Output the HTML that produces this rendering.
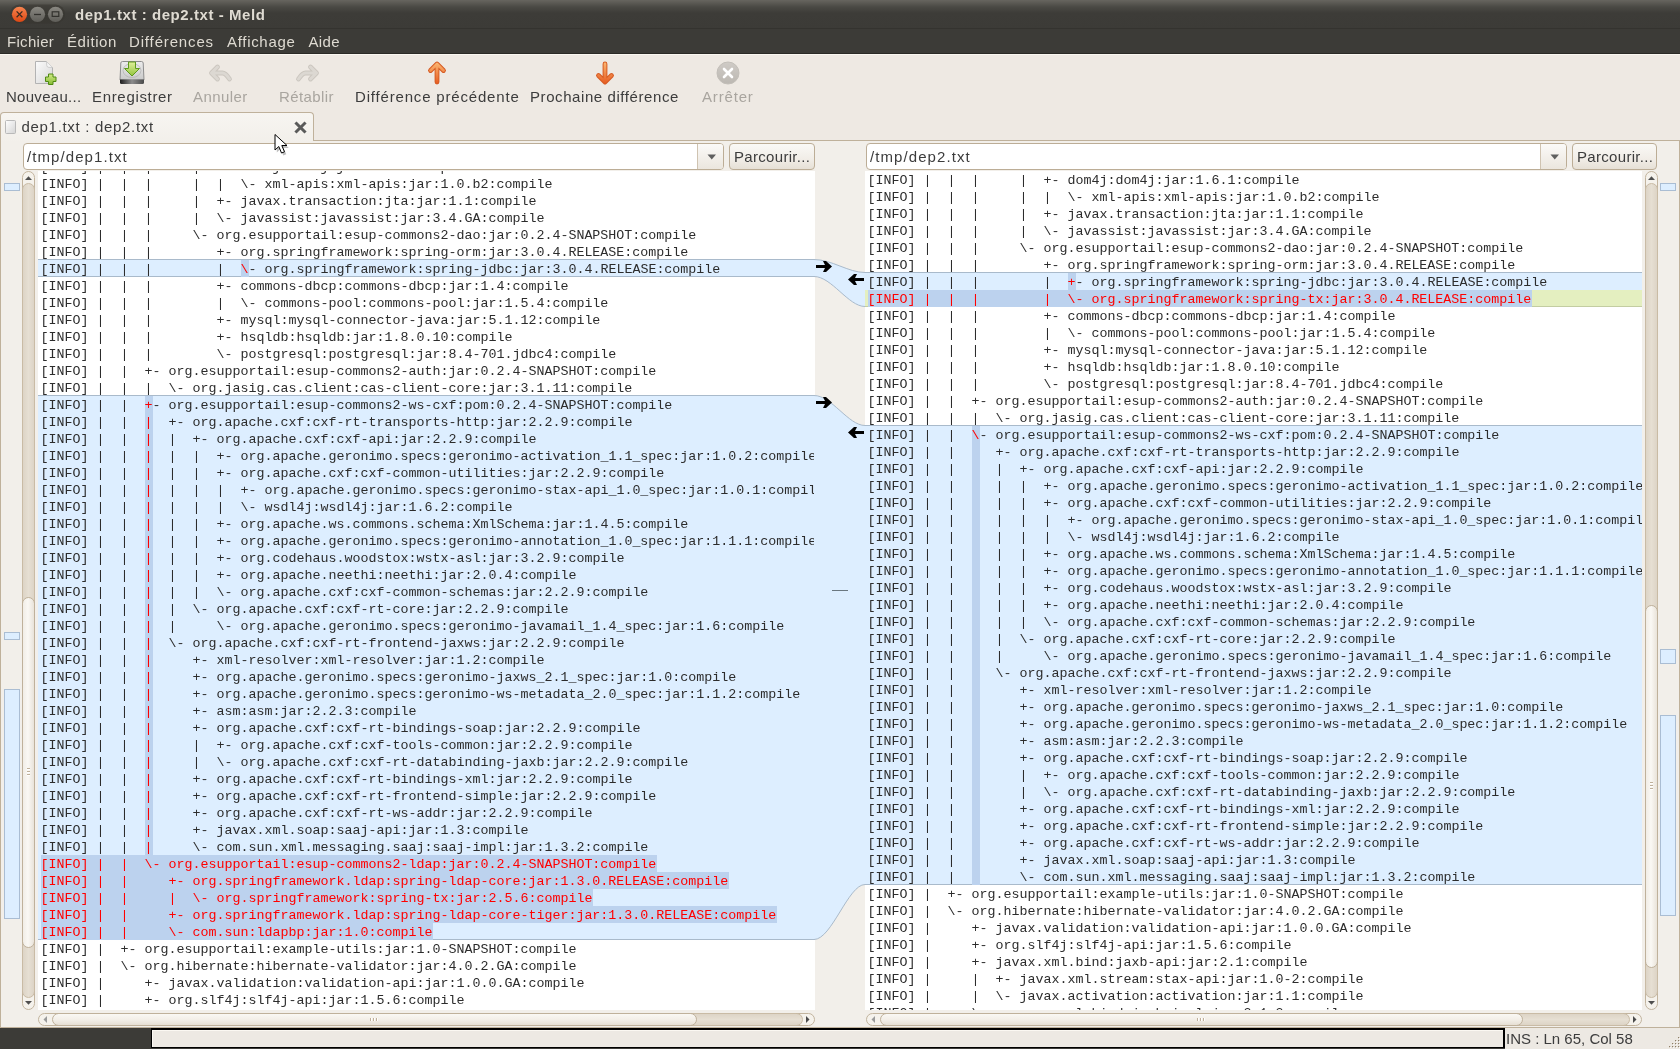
<!DOCTYPE html><html><head><meta charset="utf-8"><style>
*{margin:0;padding:0;box-sizing:border-box}
html,body{width:1680px;height:1049px;overflow:hidden}
body{position:relative;background:#eee9e3;font-family:"Liberation Sans",sans-serif}
.a{position:absolute}
.t{white-space:pre}
.code{font-family:"Liberation Mono",monospace;font-size:13.3333px;line-height:17px;white-space:pre;color:#2c2c2c}
.ln{position:absolute;left:2.5px;height:17px}
.r{color:#ff0000}
.hl{background:#bcd2ee}
.tv{position:absolute;background:#fff;overflow:hidden}
.sb{position:absolute}
</style></head><body><div class="a" style="left:0;top:0;width:1680px;height:1049px;overflow:hidden;will-change:transform">
<div class="a" style="left:0;top:0;width:1680px;height:29px;background:linear-gradient(#67655f 0px,#4a4944 7px,#3d3c38 13px,#3c3b37 100%)"></div>
<div class="a" style="left:0;top:28px;width:1680px;height:1px;background:#34332f"></div>
<svg class="a" style="left:0;top:0" width="80" height="29" viewBox="0 0 80 29">
<defs>
<linearGradient id="gc" x1="0" y1="0" x2="0" y2="1"><stop offset="0" stop-color="#f7844f"/><stop offset="1" stop-color="#dd4814"/></linearGradient>
<linearGradient id="gg" x1="0" y1="0" x2="0" y2="1"><stop offset="0" stop-color="#8a8882"/><stop offset="1" stop-color="#5f5e59"/></linearGradient>
</defs>
<rect x="10" y="4.5" width="55" height="19" rx="9.5" fill="#36352f" opacity="0.55"/>
<circle cx="19.5" cy="14.3" r="7.6" fill="url(#gc)"/>
<path d="M16.6 11.4 L22.4 17.2 M22.4 11.4 L16.6 17.2" stroke="#3a2a20" stroke-width="1.3"/>
<circle cx="37.5" cy="14.3" r="7.6" fill="url(#gg)"/>
<path d="M34 14.5 H41" stroke="#33322e" stroke-width="1.3"/>
<circle cx="55.5" cy="14.3" r="7.6" fill="url(#gg)"/>
<rect x="52.2" y="11.8" width="6.6" height="4.6" fill="none" stroke="#33322e" stroke-width="1.2"/>
</svg>
<div class="a t" style="left:75px;top:7.30px;font-size:15px;line-height:15px;color:#dfdbd2;font-weight:bold;letter-spacing:0.560px;">dep1.txt : dep2.txt - Meld</div>
<div class="a" style="left:0;top:29px;width:1680px;height:25px;background:#3c3b37"></div>
<div class="a" style="left:0;top:53px;width:1680px;height:1px;background:#2b2a26"></div>
<div class="a t" style="left:7px;top:34.00px;font-size:15px;line-height:15px;color:#dfdbd2;font-weight:normal;letter-spacing:0.300px;">Fichier</div>
<div class="a t" style="left:67px;top:34.00px;font-size:15px;line-height:15px;color:#dfdbd2;font-weight:normal;letter-spacing:0.580px;">Édition</div>
<div class="a t" style="left:129px;top:34.00px;font-size:15px;line-height:15px;color:#dfdbd2;font-weight:normal;letter-spacing:0.850px;">Différences</div>
<div class="a t" style="left:227px;top:34.00px;font-size:15px;line-height:15px;color:#dfdbd2;font-weight:normal;letter-spacing:0.690px;">Affichage</div>
<div class="a t" style="left:308.5px;top:34.00px;font-size:15px;line-height:15px;color:#dfdbd2;font-weight:normal;letter-spacing:0.330px;">Aide</div>
<div class="a" style="left:0;top:54px;width:1680px;height:1px;background:#faf7f1"></div>
<svg class="a" style="left:28px;top:56px" width="124" height="34" viewBox="28 56 124 34">
<defs><linearGradient id="pg" x1="0" y1="0" x2="1" y2="1"><stop offset="0" stop-color="#fbfbfb"/><stop offset="1" stop-color="#d6d6d6"/></linearGradient>
<linearGradient id="grn" x1="0" y1="0" x2="0" y2="1"><stop offset="0" stop-color="#d2ea86"/><stop offset="1" stop-color="#86bb34"/></linearGradient>
<linearGradient id="dr" x1="0" y1="0" x2="0" y2="1"><stop offset="0" stop-color="#ececec"/><stop offset="1" stop-color="#c9c9c9"/></linearGradient>
<linearGradient id="db" x1="0" y1="0" x2="1" y2="0"><stop offset="0" stop-color="#1e1e1e"/><stop offset="0.5" stop-color="#8c8c8c"/><stop offset="1" stop-color="#4a4a4a"/></linearGradient>
<linearGradient id="ga" x1="0" y1="0" x2="0" y2="1"><stop offset="0" stop-color="#e0f09a"/><stop offset="1" stop-color="#92c43e"/></linearGradient></defs>
<path d="M35.5 61.5 H46.5 L52.5 67.5 V83.5 H35.5 Z" fill="url(#pg)" stroke="#b3b3b3"/>
<path d="M46.5 61.5 Q46.5 66.5 47.5 67 Q48 67.5 52.5 67.5" fill="#f4f4f4" stroke="#c4c4c4" stroke-width="0.8"/>
<path d="M45.5 77 h3 v-3 h4.5 v3 h3 v4.5 h-3 v3 h-4.5 v-3 h-3 z" fill="url(#grn)" stroke="#4f8a12" stroke-width="1"/>
<path d="M122.5 61.5 H141.5 Q143 61.5 143.2 63 L144 80 H120 L120.8 63 Q121 61.5 122.5 61.5 Z" fill="url(#dr)" stroke="#8d8d8d"/>
<path d="M120 79.5 H144 V82.5 Q144 84 142.5 84 H121.5 Q120 84 120 82.5 Z" fill="url(#db)"/>
<ellipse cx="132" cy="70.5" rx="9" ry="7" fill="none" stroke="#b0b0b0" stroke-width="0.7"/>
<path d="M128.5 62 H135.5 V68.5 H139.5 L132 76 L124.5 68.5 H128.5 Z" fill="url(#ga)" stroke="#5e9a1c" stroke-width="1"/>
</svg>

<svg class="a" style="left:195px;top:56px" width="140" height="34" viewBox="195 56 140 34">
<g fill="none" stroke-linecap="round" stroke-linejoin="round">
<path d="M217.5 67 L211.5 73 L217.5 79 M212 73 H222.5 Q225.5 73 229.5 79" stroke="#cbc6bf" stroke-width="4.8"/>
<path d="M217.5 67 L211.5 73 L217.5 79 M212 73 H222.5 Q225.5 73 229.5 79" stroke="#dcd8d2" stroke-width="3"/>
<path d="M310.5 67 L316.5 73 L310.5 79 M316 73 H305.5 Q302.5 73 298.5 79" stroke="#cbc6bf" stroke-width="4.8"/>
<path d="M310.5 67 L316.5 73 L310.5 79 M316 73 H305.5 Q302.5 73 298.5 79" stroke="#dcd8d2" stroke-width="3"/>
</g></svg>

<svg class="a" style="left:415px;top:56px" width="210" height="34" viewBox="415 56 210 34">
<defs><linearGradient id="or1" gradientUnits="userSpaceOnUse" x1="0" y1="62" x2="0" y2="84"><stop offset="0" stop-color="#fbb873"/><stop offset="1" stop-color="#e65a1f"/></linearGradient></defs>
<g fill="none" stroke-linecap="round" stroke-linejoin="round">
<path d="M430.5 70.5 L437 64 L443.5 70.5 M437 64.5 V82" stroke="#d65a22" stroke-width="4.8"/>
<path d="M430.5 70.5 L437 64 L443.5 70.5 M437 64.5 V82" stroke="url(#or1)" stroke-width="2.8"/>
<path d="M598.5 75.5 L605 82 L611.5 75.5 M605 81.5 V64" stroke="#d65a22" stroke-width="4.8"/>
<path d="M598.5 75.5 L605 82 L611.5 75.5 M605 81.5 V64" stroke="url(#or1)" stroke-width="2.8"/>
</g></svg>

<svg class="a" style="left:714.5px;top:60px" width="26" height="26" viewBox="0 0 26 26">
<defs><linearGradient id="st" x1="0" y1="0" x2="0" y2="1"><stop offset="0" stop-color="#cfcbc6"/><stop offset="1" stop-color="#bcb8b2"/></linearGradient></defs>
<circle cx="13" cy="13" r="11" fill="url(#st)" stroke="#c2beb8"/>
<path d="M9 9 L17 17 M17 9 L9 17" stroke="#fff" stroke-width="2.6" stroke-linecap="round"/>
</svg>
<div class="a t" style="left:6px;top:88.80px;font-size:15px;line-height:15px;color:#3c3c3c;font-weight:normal;letter-spacing:0.280px;">Nouveau...</div>
<div class="a t" style="left:92px;top:88.80px;font-size:15px;line-height:15px;color:#3c3c3c;font-weight:normal;letter-spacing:0.675px;">Enregistrer</div>
<div class="a t" style="left:193px;top:88.80px;font-size:15px;line-height:15px;color:#a9a59f;font-weight:normal;letter-spacing:0.420px;">Annuler</div>
<div class="a t" style="left:279px;top:88.80px;font-size:15px;line-height:15px;color:#a9a59f;font-weight:normal;letter-spacing:0.390px;">Rétablir</div>
<div class="a t" style="left:355px;top:88.80px;font-size:15px;line-height:15px;color:#3c3c3c;font-weight:normal;letter-spacing:0.820px;">Différence précédente</div>
<div class="a t" style="left:530px;top:88.80px;font-size:15px;line-height:15px;color:#3c3c3c;font-weight:normal;letter-spacing:0.580px;">Prochaine différence</div>
<div class="a t" style="left:702px;top:88.80px;font-size:15px;line-height:15px;color:#a9a59f;font-weight:normal;letter-spacing:0.830px;">Arrêter</div>
<div class="a" style="left:313px;top:140px;width:1367px;height:1px;background:#bfb19b"></div>
<div class="a" style="left:0;top:112px;width:314px;height:31px;border:1px solid #bfb19b;border-bottom:none;border-radius:4px 4px 0 0;background:linear-gradient(#f7f5f1,#f2efea)"></div>
<svg class="a" style="left:4px;top:119px" width="14" height="16" viewBox="0 0 14 16">
<defs><linearGradient id="td" x1="0" y1="0" x2="1" y2="1"><stop offset="0" stop-color="#ffffff"/><stop offset="1" stop-color="#d4d4d4"/></linearGradient></defs>
<rect x="1.5" y="1.5" width="10" height="13" rx="1" fill="url(#td)" stroke="#b9b9b9"/>
</svg>
<div class="a t" style="left:21.5px;top:119.30px;font-size:15px;line-height:15px;color:#3c3c3c;font-weight:normal;letter-spacing:0.690px;">dep1.txt : dep2.txt</div>
<svg class="a" style="left:293.5px;top:120.5px" width="13" height="13" viewBox="0 0 13 13">
<path d="M2.5 2.5 L10.5 10.5 M10.5 2.5 L2.5 10.5" stroke="#5a5a5a" stroke-width="3" stroke-linecap="square"/>
</svg>
<div class="a" style="left:0;top:141px;width:1px;height:887px;background:#bfb19b"></div>
<div class="a" style="left:1679px;top:140px;width:1px;height:888px;background:#bfb19b"></div>
<div class="a" style="left:0;top:1027px;width:1680px;height:1px;background:#bfb19b"></div>
<div class="a" style="left:1px;top:141px;width:1678px;height:886px;background:#f2efea"></div>
<div class="a" style="left:23px;top:143px;width:701px;height:27px;border:1px solid #bcad96;border-radius:4px;background:#fff;overflow:hidden"><div class="a" style="left:673px;top:0;width:27px;height:25px;border-left:1px solid #cfc3b1;background:linear-gradient(#fbfaf8,#ebe6de)"></div><svg class="a" style="left:683px;top:10px" width="10" height="7"><path d="M0.5 0.5 H9 L4.75 5.5Z" fill="#5f5f5f"/></svg></div>
<div class="a t" style="left:27px;top:149.00px;font-size:15px;line-height:15px;color:#3c3c3c;font-weight:normal;letter-spacing:1.080px;">/tmp/dep1.txt</div>
<div class="a" style="left:729px;top:143px;width:86px;height:27px;border:1px solid #bcad96;border-radius:4px;background:linear-gradient(#faf9f6,#f1ede7 60%,#e6e0d6)"></div>
<div class="a t" style="left:734px;top:149.00px;font-size:15px;line-height:15px;color:#3c3c3c;font-weight:normal;letter-spacing:0.310px;">Parcourir...</div>
<div class="a" style="left:866px;top:143px;width:701px;height:27px;border:1px solid #bcad96;border-radius:4px;background:#fff;overflow:hidden"><div class="a" style="left:673px;top:0;width:27px;height:25px;border-left:1px solid #cfc3b1;background:linear-gradient(#fbfaf8,#ebe6de)"></div><svg class="a" style="left:683px;top:10px" width="10" height="7"><path d="M0.5 0.5 H9 L4.75 5.5Z" fill="#5f5f5f"/></svg></div>
<div class="a t" style="left:870px;top:149.00px;font-size:15px;line-height:15px;color:#3c3c3c;font-weight:normal;letter-spacing:1.080px;">/tmp/dep2.txt</div>
<div class="a" style="left:1572px;top:143px;width:85px;height:27px;border:1px solid #bcad96;border-radius:4px;background:linear-gradient(#faf9f6,#f1ede7 60%,#e6e0d6)"></div>
<div class="a t" style="left:1577px;top:149.00px;font-size:15px;line-height:15px;color:#3c3c3c;font-weight:normal;letter-spacing:0.310px;">Parcourir...</div>
<div class="a" style="left:4px;top:183px;width:16px;height:8px;background:#ddeeff;border:1px solid #aabdd3"></div>
<div class="a" style="left:4px;top:632px;width:16px;height:8px;background:#ddeeff;border:1px solid #aabdd3"></div>
<div class="a" style="left:4px;top:689px;width:16px;height:230px;background:#ddeeff;border:1px solid #aabdd3"></div>
<div class="a" style="left:1660px;top:183px;width:16px;height:8px;background:#ddeeff;border:1px solid #aabdd3"></div>
<div class="a" style="left:1660px;top:649px;width:16px;height:15px;background:#ddeeff;border:1px solid #aabdd3"></div>
<div class="a" style="left:1660px;top:715px;width:16px;height:201px;background:#ddeeff;border:1px solid #aabdd3"></div>
<div class="a" style="left:22px;top:171px;width:13px;height:839px;border:1px solid #c2b49e;border-radius:7px;background:#f5f2ec"></div>
<div class="a" style="left:22px;top:183px;width:13px;height:815px;border:1px solid #c9bba5;border-radius:7px;background:linear-gradient(90deg,#ddd4c6,#e6dfd3 50%,#ddd4c6)"></div>
<div class="a" style="left:22px;top:597px;width:13px;height:351px;border:1px solid #bfb19b;border-radius:7px;background:linear-gradient(90deg,#f1ede6,#faf8f4 45%,#e9e3d9)"></div>
<svg class="a" style="left:22px;top:767px" width="13" height="10"><g fill="#bfb09a"><rect x="5" y="1" width="3" height="1"/><rect x="5" y="4" width="3" height="1"/><rect x="5" y="7" width="3" height="1"/></g><g fill="#fff"><rect x="5" y="2" width="3" height="1"/><rect x="5" y="5" width="3" height="1"/><rect x="5" y="8" width="3" height="1"/></g></svg>
<svg class="a" style="left:24px;top:175px" width="9" height="6"><path d="M1 5 L4.5 1.2 L8 5Z" fill="#4f4f4f"/></svg>
<svg class="a" style="left:24px;top:1000px" width="9" height="6"><path d="M1 1 L4.5 4.8 L8 1Z" fill="#4f4f4f"/></svg>
<div class="a" style="left:1645px;top:171px;width:13px;height:839px;border:1px solid #c2b49e;border-radius:7px;background:#f5f2ec"></div>
<div class="a" style="left:1645px;top:183px;width:13px;height:815px;border:1px solid #c9bba5;border-radius:7px;background:linear-gradient(90deg,#ddd4c6,#e6dfd3 50%,#ddd4c6)"></div>
<div class="a" style="left:1645px;top:605px;width:13px;height:363px;border:1px solid #bfb19b;border-radius:7px;background:linear-gradient(90deg,#f1ede6,#faf8f4 45%,#e9e3d9)"></div>
<svg class="a" style="left:1645px;top:781px" width="13" height="10"><g fill="#bfb09a"><rect x="5" y="1" width="3" height="1"/><rect x="5" y="4" width="3" height="1"/><rect x="5" y="7" width="3" height="1"/></g><g fill="#fff"><rect x="5" y="2" width="3" height="1"/><rect x="5" y="5" width="3" height="1"/><rect x="5" y="8" width="3" height="1"/></g></svg>
<svg class="a" style="left:1647px;top:175px" width="9" height="6"><path d="M1 5 L4.5 1.2 L8 5Z" fill="#4f4f4f"/></svg>
<svg class="a" style="left:1647px;top:1000px" width="9" height="6"><path d="M1 1 L4.5 4.8 L8 1Z" fill="#4f4f4f"/></svg>
<div class="a" style="left:38px;top:1013px;width:777px;height:13px;border:1px solid #c2b49e;border-radius:7px;background:#f5f2ec"></div>
<div class="a" style="left:54px;top:1013px;width:749px;height:13px;border:1px solid #c9bba5;border-radius:7px;background:linear-gradient(#ddd4c6,#e6dfd3 50%,#ddd4c6)"></div>
<div class="a" style="left:52px;top:1013px;width:645px;height:13px;border:1px solid #bfb19b;border-radius:7px;background:linear-gradient(#faf8f4,#f3efe8 50%,#e6dfd4)"></div>
<svg class="a" style="left:369px;top:1013px" width="10" height="13"><g fill="#bfb09a"><rect x="1" y="5" width="1" height="3"/><rect x="4" y="5" width="1" height="3"/><rect x="7" y="5" width="1" height="3"/></g><g fill="#fff"><rect x="2" y="5" width="1" height="3"/><rect x="5" y="5" width="1" height="3"/><rect x="8" y="5" width="1" height="3"/></g></svg>
<svg class="a" style="left:42px;top:1015px" width="6" height="9"><path d="M5 1 L1.5 4.5 L5 8Z" fill="#9a9a9a"/></svg>
<svg class="a" style="left:805px;top:1015px" width="6" height="9"><path d="M1 1 L4.5 4.5 L1 8Z" fill="#4a4a4a"/></svg>
<div class="a" style="left:866px;top:1013px;width:776px;height:13px;border:1px solid #c2b49e;border-radius:7px;background:#f5f2ec"></div>
<div class="a" style="left:882px;top:1013px;width:748px;height:13px;border:1px solid #c9bba5;border-radius:7px;background:linear-gradient(#ddd4c6,#e6dfd3 50%,#ddd4c6)"></div>
<div class="a" style="left:880px;top:1013px;width:643px;height:13px;border:1px solid #bfb19b;border-radius:7px;background:linear-gradient(#faf8f4,#f3efe8 50%,#e6dfd4)"></div>
<svg class="a" style="left:1196px;top:1013px" width="10" height="13"><g fill="#bfb09a"><rect x="1" y="5" width="1" height="3"/><rect x="4" y="5" width="1" height="3"/><rect x="7" y="5" width="1" height="3"/></g><g fill="#fff"><rect x="2" y="5" width="1" height="3"/><rect x="5" y="5" width="1" height="3"/><rect x="8" y="5" width="1" height="3"/></g></svg>
<svg class="a" style="left:870px;top:1015px" width="6" height="9"><path d="M5 1 L1.5 4.5 L5 8Z" fill="#9a9a9a"/></svg>
<svg class="a" style="left:1632px;top:1015px" width="6" height="9"><path d="M1 1 L4.5 4.5 L1 8Z" fill="#4a4a4a"/></svg>
<div class="tv code" style="left:38px;top:171px;width:777px;height:839px">
<div class="a" style="left:0;top:88px;width:777px;height:18px;background:#ddeeff;border-top:1px solid #a9bacb;border-bottom:1px solid #a9bacb"></div>
<div class="a" style="left:0;top:224px;width:777px;height:545px;background:#ddeeff;border-top:1px solid #a9bacb;border-bottom:1px solid #a9bacb"></div>
<div class="a" style="left:203px;top:89px;width:8px;height:17px;background:#bcd2ee"></div>
<div class="a" style="left:107px;top:225px;width:8px;height:17px;background:#bcd2ee"></div>
<div class="a" style="left:107px;top:242px;width:8px;height:17px;background:#bcd2ee"></div>
<div class="a" style="left:107px;top:259px;width:8px;height:17px;background:#bcd2ee"></div>
<div class="a" style="left:107px;top:276px;width:8px;height:17px;background:#bcd2ee"></div>
<div class="a" style="left:107px;top:293px;width:8px;height:17px;background:#bcd2ee"></div>
<div class="a" style="left:107px;top:310px;width:8px;height:17px;background:#bcd2ee"></div>
<div class="a" style="left:107px;top:327px;width:8px;height:17px;background:#bcd2ee"></div>
<div class="a" style="left:107px;top:344px;width:8px;height:17px;background:#bcd2ee"></div>
<div class="a" style="left:107px;top:361px;width:8px;height:17px;background:#bcd2ee"></div>
<div class="a" style="left:107px;top:378px;width:8px;height:17px;background:#bcd2ee"></div>
<div class="a" style="left:107px;top:395px;width:8px;height:17px;background:#bcd2ee"></div>
<div class="a" style="left:107px;top:412px;width:8px;height:17px;background:#bcd2ee"></div>
<div class="a" style="left:107px;top:429px;width:8px;height:17px;background:#bcd2ee"></div>
<div class="a" style="left:107px;top:446px;width:8px;height:17px;background:#bcd2ee"></div>
<div class="a" style="left:107px;top:463px;width:8px;height:17px;background:#bcd2ee"></div>
<div class="a" style="left:107px;top:480px;width:8px;height:17px;background:#bcd2ee"></div>
<div class="a" style="left:107px;top:497px;width:8px;height:17px;background:#bcd2ee"></div>
<div class="a" style="left:107px;top:514px;width:8px;height:17px;background:#bcd2ee"></div>
<div class="a" style="left:107px;top:531px;width:8px;height:17px;background:#bcd2ee"></div>
<div class="a" style="left:107px;top:548px;width:8px;height:17px;background:#bcd2ee"></div>
<div class="a" style="left:107px;top:565px;width:8px;height:17px;background:#bcd2ee"></div>
<div class="a" style="left:107px;top:582px;width:8px;height:17px;background:#bcd2ee"></div>
<div class="a" style="left:107px;top:599px;width:8px;height:17px;background:#bcd2ee"></div>
<div class="a" style="left:107px;top:616px;width:8px;height:17px;background:#bcd2ee"></div>
<div class="a" style="left:107px;top:633px;width:8px;height:17px;background:#bcd2ee"></div>
<div class="a" style="left:107px;top:650px;width:8px;height:17px;background:#bcd2ee"></div>
<div class="a" style="left:107px;top:667px;width:8px;height:17px;background:#bcd2ee"></div>
<div class="a" style="left:3px;top:684px;width:616px;height:17px;background:#bcd2ee"></div>
<div class="a" style="left:3px;top:701px;width:688px;height:17px;background:#bcd2ee"></div>
<div class="a" style="left:3px;top:718px;width:552px;height:17px;background:#bcd2ee"></div>
<div class="a" style="left:3px;top:735px;width:736px;height:17px;background:#bcd2ee"></div>
<div class="a" style="left:3px;top:752px;width:392px;height:17px;background:#bcd2ee"></div>
<div class="ln" style="top:-12px">[INFO] |  |  |     |  +- dom4j:dom4j:jar:1.6.1:compile</div>
<div class="ln" style="top:5px">[INFO] |  |  |     |  |  \- xml-apis:xml-apis:jar:1.0.b2:compile</div>
<div class="ln" style="top:22px">[INFO] |  |  |     |  +- javax.transaction:jta:jar:1.1:compile</div>
<div class="ln" style="top:39px">[INFO] |  |  |     |  \- javassist:javassist:jar:3.4.GA:compile</div>
<div class="ln" style="top:56px">[INFO] |  |  |     \- org.esupportail:esup-commons2-dao:jar:0.2.4-SNAPSHOT:compile</div>
<div class="ln" style="top:73px">[INFO] |  |  |        +- org.springframework:spring-orm:jar:3.0.4.RELEASE:compile</div>
<div class="ln" style="top:90px">[INFO] |  |  |        |  <span class="r">\</span>- org.springframework:spring-jdbc:jar:3.0.4.RELEASE:compile</div>
<div class="ln" style="top:107px">[INFO] |  |  |        +- commons-dbcp:commons-dbcp:jar:1.4:compile</div>
<div class="ln" style="top:124px">[INFO] |  |  |        |  \- commons-pool:commons-pool:jar:1.5.4:compile</div>
<div class="ln" style="top:141px">[INFO] |  |  |        +- mysql:mysql-connector-java:jar:5.1.12:compile</div>
<div class="ln" style="top:158px">[INFO] |  |  |        +- hsqldb:hsqldb:jar:1.8.0.10:compile</div>
<div class="ln" style="top:175px">[INFO] |  |  |        \- postgresql:postgresql:jar:8.4-701.jdbc4:compile</div>
<div class="ln" style="top:192px">[INFO] |  |  +- org.esupportail:esup-commons2-auth:jar:0.2.4-SNAPSHOT:compile</div>
<div class="ln" style="top:209px">[INFO] |  |  |  \- org.jasig.cas.client:cas-client-core:jar:3.1.11:compile</div>
<div class="ln" style="top:226px">[INFO] |  |  <span class="r">+</span>- org.esupportail:esup-commons2-ws-cxf:pom:0.2.4-SNAPSHOT:compile</div>
<div class="ln" style="top:243px">[INFO] |  |  <span class="r">|</span>  +- org.apache.cxf:cxf-rt-transports-http:jar:2.2.9:compile</div>
<div class="ln" style="top:260px">[INFO] |  |  <span class="r">|</span>  |  +- org.apache.cxf:cxf-api:jar:2.2.9:compile</div>
<div class="ln" style="top:277px">[INFO] |  |  <span class="r">|</span>  |  |  +- org.apache.geronimo.specs:geronimo-activation_1.1_spec:jar:1.0.2:compile</div>
<div class="ln" style="top:294px">[INFO] |  |  <span class="r">|</span>  |  |  +- org.apache.cxf:cxf-common-utilities:jar:2.2.9:compile</div>
<div class="ln" style="top:311px">[INFO] |  |  <span class="r">|</span>  |  |  |  +- org.apache.geronimo.specs:geronimo-stax-api_1.0_spec:jar:1.0.1:compile</div>
<div class="ln" style="top:328px">[INFO] |  |  <span class="r">|</span>  |  |  |  \- wsdl4j:wsdl4j:jar:1.6.2:compile</div>
<div class="ln" style="top:345px">[INFO] |  |  <span class="r">|</span>  |  |  +- org.apache.ws.commons.schema:XmlSchema:jar:1.4.5:compile</div>
<div class="ln" style="top:362px">[INFO] |  |  <span class="r">|</span>  |  |  +- org.apache.geronimo.specs:geronimo-annotation_1.0_spec:jar:1.1.1:compile</div>
<div class="ln" style="top:379px">[INFO] |  |  <span class="r">|</span>  |  |  +- org.codehaus.woodstox:wstx-asl:jar:3.2.9:compile</div>
<div class="ln" style="top:396px">[INFO] |  |  <span class="r">|</span>  |  |  +- org.apache.neethi:neethi:jar:2.0.4:compile</div>
<div class="ln" style="top:413px">[INFO] |  |  <span class="r">|</span>  |  |  \- org.apache.cxf:cxf-common-schemas:jar:2.2.9:compile</div>
<div class="ln" style="top:430px">[INFO] |  |  <span class="r">|</span>  |  \- org.apache.cxf:cxf-rt-core:jar:2.2.9:compile</div>
<div class="ln" style="top:447px">[INFO] |  |  <span class="r">|</span>  |     \- org.apache.geronimo.specs:geronimo-javamail_1.4_spec:jar:1.6:compile</div>
<div class="ln" style="top:464px">[INFO] |  |  <span class="r">|</span>  \- org.apache.cxf:cxf-rt-frontend-jaxws:jar:2.2.9:compile</div>
<div class="ln" style="top:481px">[INFO] |  |  <span class="r">|</span>     +- xml-resolver:xml-resolver:jar:1.2:compile</div>
<div class="ln" style="top:498px">[INFO] |  |  <span class="r">|</span>     +- org.apache.geronimo.specs:geronimo-jaxws_2.1_spec:jar:1.0:compile</div>
<div class="ln" style="top:515px">[INFO] |  |  <span class="r">|</span>     +- org.apache.geronimo.specs:geronimo-ws-metadata_2.0_spec:jar:1.1.2:compile</div>
<div class="ln" style="top:532px">[INFO] |  |  <span class="r">|</span>     +- asm:asm:jar:2.2.3:compile</div>
<div class="ln" style="top:549px">[INFO] |  |  <span class="r">|</span>     +- org.apache.cxf:cxf-rt-bindings-soap:jar:2.2.9:compile</div>
<div class="ln" style="top:566px">[INFO] |  |  <span class="r">|</span>     |  +- org.apache.cxf:cxf-tools-common:jar:2.2.9:compile</div>
<div class="ln" style="top:583px">[INFO] |  |  <span class="r">|</span>     |  \- org.apache.cxf:cxf-rt-databinding-jaxb:jar:2.2.9:compile</div>
<div class="ln" style="top:600px">[INFO] |  |  <span class="r">|</span>     +- org.apache.cxf:cxf-rt-bindings-xml:jar:2.2.9:compile</div>
<div class="ln" style="top:617px">[INFO] |  |  <span class="r">|</span>     +- org.apache.cxf:cxf-rt-frontend-simple:jar:2.2.9:compile</div>
<div class="ln" style="top:634px">[INFO] |  |  <span class="r">|</span>     +- org.apache.cxf:cxf-rt-ws-addr:jar:2.2.9:compile</div>
<div class="ln" style="top:651px">[INFO] |  |  <span class="r">|</span>     +- javax.xml.soap:saaj-api:jar:1.3:compile</div>
<div class="ln" style="top:668px">[INFO] |  |  <span class="r">|</span>     \- com.sun.xml.messaging.saaj:saaj-impl:jar:1.3.2:compile</div>
<div class="ln" style="top:685px"><span class="r">[INFO] |  |  \- org.esupportail:esup-commons2-ldap:jar:0.2.4-SNAPSHOT:compile</span></div>
<div class="ln" style="top:702px"><span class="r">[INFO] |  |     +- org.springframework.ldap:spring-ldap-core:jar:1.3.0.RELEASE:compile</span></div>
<div class="ln" style="top:719px"><span class="r">[INFO] |  |     |  \- org.springframework:spring-tx:jar:2.5.6:compile</span></div>
<div class="ln" style="top:736px"><span class="r">[INFO] |  |     +- org.springframework.ldap:spring-ldap-core-tiger:jar:1.3.0.RELEASE:compile</span></div>
<div class="ln" style="top:753px"><span class="r">[INFO] |  |     \- com.sun:ldapbp:jar:1.0:compile</span></div>
<div class="ln" style="top:770px">[INFO] |  +- org.esupportail:example-utils:jar:1.0-SNAPSHOT:compile</div>
<div class="ln" style="top:787px">[INFO] |  \- org.hibernate:hibernate-validator:jar:4.0.2.GA:compile</div>
<div class="ln" style="top:804px">[INFO] |     +- javax.validation:validation-api:jar:1.0.0.GA:compile</div>
<div class="ln" style="top:821px">[INFO] |     +- org.slf4j:slf4j-api:jar:1.5.6:compile</div>
</div>
<div class="tv code" style="left:865px;top:171px;width:777px;height:839px">
<div class="a" style="left:0;top:101px;width:777px;height:35px;background:#ddeeff;border-top:1px solid #a9bacb;border-bottom:1px solid #a9bacb"></div>
<div class="a" style="left:0;top:254px;width:777px;height:460px;background:#ddeeff;border-top:1px solid #a9bacb;border-bottom:1px solid #a9bacb"></div>
<div class="a" style="left:0;top:119px;width:777px;height:16px;background:#e4efc0"></div>
<div class="a" style="left:0;top:135px;width:777px;height:1px;background:#c3cda2"></div>
<div class="a" style="left:203px;top:102px;width:8px;height:17px;background:#bcd2ee"></div>
<div class="a" style="left:3px;top:119px;width:664px;height:17px;background:#bcd2ee"></div>
<div class="a" style="left:107px;top:255px;width:8px;height:17px;background:#bcd2ee"></div>
<div class="a" style="left:107px;top:272px;width:8px;height:17px;background:#bcd2ee"></div>
<div class="a" style="left:107px;top:289px;width:8px;height:17px;background:#bcd2ee"></div>
<div class="a" style="left:107px;top:306px;width:8px;height:17px;background:#bcd2ee"></div>
<div class="a" style="left:107px;top:323px;width:8px;height:17px;background:#bcd2ee"></div>
<div class="a" style="left:107px;top:340px;width:8px;height:17px;background:#bcd2ee"></div>
<div class="a" style="left:107px;top:357px;width:8px;height:17px;background:#bcd2ee"></div>
<div class="a" style="left:107px;top:374px;width:8px;height:17px;background:#bcd2ee"></div>
<div class="a" style="left:107px;top:391px;width:8px;height:17px;background:#bcd2ee"></div>
<div class="a" style="left:107px;top:408px;width:8px;height:17px;background:#bcd2ee"></div>
<div class="a" style="left:107px;top:425px;width:8px;height:17px;background:#bcd2ee"></div>
<div class="a" style="left:107px;top:442px;width:8px;height:17px;background:#bcd2ee"></div>
<div class="a" style="left:107px;top:459px;width:8px;height:17px;background:#bcd2ee"></div>
<div class="a" style="left:107px;top:476px;width:8px;height:17px;background:#bcd2ee"></div>
<div class="a" style="left:107px;top:493px;width:8px;height:17px;background:#bcd2ee"></div>
<div class="a" style="left:107px;top:510px;width:8px;height:17px;background:#bcd2ee"></div>
<div class="a" style="left:107px;top:527px;width:8px;height:17px;background:#bcd2ee"></div>
<div class="a" style="left:107px;top:544px;width:8px;height:17px;background:#bcd2ee"></div>
<div class="a" style="left:107px;top:561px;width:8px;height:17px;background:#bcd2ee"></div>
<div class="a" style="left:107px;top:578px;width:8px;height:17px;background:#bcd2ee"></div>
<div class="a" style="left:107px;top:595px;width:8px;height:17px;background:#bcd2ee"></div>
<div class="a" style="left:107px;top:612px;width:8px;height:17px;background:#bcd2ee"></div>
<div class="a" style="left:107px;top:629px;width:8px;height:17px;background:#bcd2ee"></div>
<div class="a" style="left:107px;top:646px;width:8px;height:17px;background:#bcd2ee"></div>
<div class="a" style="left:107px;top:663px;width:8px;height:17px;background:#bcd2ee"></div>
<div class="a" style="left:107px;top:680px;width:8px;height:17px;background:#bcd2ee"></div>
<div class="a" style="left:107px;top:697px;width:8px;height:17px;background:#bcd2ee"></div>
<div class="ln" style="top:1px">[INFO] |  |  |     |  +- dom4j:dom4j:jar:1.6.1:compile</div>
<div class="ln" style="top:18px">[INFO] |  |  |     |  |  \- xml-apis:xml-apis:jar:1.0.b2:compile</div>
<div class="ln" style="top:35px">[INFO] |  |  |     |  +- javax.transaction:jta:jar:1.1:compile</div>
<div class="ln" style="top:52px">[INFO] |  |  |     |  \- javassist:javassist:jar:3.4.GA:compile</div>
<div class="ln" style="top:69px">[INFO] |  |  |     \- org.esupportail:esup-commons2-dao:jar:0.2.4-SNAPSHOT:compile</div>
<div class="ln" style="top:86px">[INFO] |  |  |        +- org.springframework:spring-orm:jar:3.0.4.RELEASE:compile</div>
<div class="ln" style="top:103px">[INFO] |  |  |        |  <span class="r">+</span>- org.springframework:spring-jdbc:jar:3.0.4.RELEASE:compile</div>
<div class="ln" style="top:120px"><span class="r">[INFO] |  |  |        |  \- org.springframework:spring-tx:jar:3.0.4.RELEASE:compile</span></div>
<div class="ln" style="top:137px">[INFO] |  |  |        +- commons-dbcp:commons-dbcp:jar:1.4:compile</div>
<div class="ln" style="top:154px">[INFO] |  |  |        |  \- commons-pool:commons-pool:jar:1.5.4:compile</div>
<div class="ln" style="top:171px">[INFO] |  |  |        +- mysql:mysql-connector-java:jar:5.1.12:compile</div>
<div class="ln" style="top:188px">[INFO] |  |  |        +- hsqldb:hsqldb:jar:1.8.0.10:compile</div>
<div class="ln" style="top:205px">[INFO] |  |  |        \- postgresql:postgresql:jar:8.4-701.jdbc4:compile</div>
<div class="ln" style="top:222px">[INFO] |  |  +- org.esupportail:esup-commons2-auth:jar:0.2.4-SNAPSHOT:compile</div>
<div class="ln" style="top:239px">[INFO] |  |  |  \- org.jasig.cas.client:cas-client-core:jar:3.1.11:compile</div>
<div class="ln" style="top:256px">[INFO] |  |  <span class="r">\</span>- org.esupportail:esup-commons2-ws-cxf:pom:0.2.4-SNAPSHOT:compile</div>
<div class="ln" style="top:273px">[INFO] |  |  <span class="r"> </span>  +- org.apache.cxf:cxf-rt-transports-http:jar:2.2.9:compile</div>
<div class="ln" style="top:290px">[INFO] |  |  <span class="r"> </span>  |  +- org.apache.cxf:cxf-api:jar:2.2.9:compile</div>
<div class="ln" style="top:307px">[INFO] |  |  <span class="r"> </span>  |  |  +- org.apache.geronimo.specs:geronimo-activation_1.1_spec:jar:1.0.2:compile</div>
<div class="ln" style="top:324px">[INFO] |  |  <span class="r"> </span>  |  |  +- org.apache.cxf:cxf-common-utilities:jar:2.2.9:compile</div>
<div class="ln" style="top:341px">[INFO] |  |  <span class="r"> </span>  |  |  |  +- org.apache.geronimo.specs:geronimo-stax-api_1.0_spec:jar:1.0.1:compile</div>
<div class="ln" style="top:358px">[INFO] |  |  <span class="r"> </span>  |  |  |  \- wsdl4j:wsdl4j:jar:1.6.2:compile</div>
<div class="ln" style="top:375px">[INFO] |  |  <span class="r"> </span>  |  |  +- org.apache.ws.commons.schema:XmlSchema:jar:1.4.5:compile</div>
<div class="ln" style="top:392px">[INFO] |  |  <span class="r"> </span>  |  |  +- org.apache.geronimo.specs:geronimo-annotation_1.0_spec:jar:1.1.1:compile</div>
<div class="ln" style="top:409px">[INFO] |  |  <span class="r"> </span>  |  |  +- org.codehaus.woodstox:wstx-asl:jar:3.2.9:compile</div>
<div class="ln" style="top:426px">[INFO] |  |  <span class="r"> </span>  |  |  +- org.apache.neethi:neethi:jar:2.0.4:compile</div>
<div class="ln" style="top:443px">[INFO] |  |  <span class="r"> </span>  |  |  \- org.apache.cxf:cxf-common-schemas:jar:2.2.9:compile</div>
<div class="ln" style="top:460px">[INFO] |  |  <span class="r"> </span>  |  \- org.apache.cxf:cxf-rt-core:jar:2.2.9:compile</div>
<div class="ln" style="top:477px">[INFO] |  |  <span class="r"> </span>  |     \- org.apache.geronimo.specs:geronimo-javamail_1.4_spec:jar:1.6:compile</div>
<div class="ln" style="top:494px">[INFO] |  |  <span class="r"> </span>  \- org.apache.cxf:cxf-rt-frontend-jaxws:jar:2.2.9:compile</div>
<div class="ln" style="top:511px">[INFO] |  |  <span class="r"> </span>     +- xml-resolver:xml-resolver:jar:1.2:compile</div>
<div class="ln" style="top:528px">[INFO] |  |  <span class="r"> </span>     +- org.apache.geronimo.specs:geronimo-jaxws_2.1_spec:jar:1.0:compile</div>
<div class="ln" style="top:545px">[INFO] |  |  <span class="r"> </span>     +- org.apache.geronimo.specs:geronimo-ws-metadata_2.0_spec:jar:1.1.2:compile</div>
<div class="ln" style="top:562px">[INFO] |  |  <span class="r"> </span>     +- asm:asm:jar:2.2.3:compile</div>
<div class="ln" style="top:579px">[INFO] |  |  <span class="r"> </span>     +- org.apache.cxf:cxf-rt-bindings-soap:jar:2.2.9:compile</div>
<div class="ln" style="top:596px">[INFO] |  |  <span class="r"> </span>     |  +- org.apache.cxf:cxf-tools-common:jar:2.2.9:compile</div>
<div class="ln" style="top:613px">[INFO] |  |  <span class="r"> </span>     |  \- org.apache.cxf:cxf-rt-databinding-jaxb:jar:2.2.9:compile</div>
<div class="ln" style="top:630px">[INFO] |  |  <span class="r"> </span>     +- org.apache.cxf:cxf-rt-bindings-xml:jar:2.2.9:compile</div>
<div class="ln" style="top:647px">[INFO] |  |  <span class="r"> </span>     +- org.apache.cxf:cxf-rt-frontend-simple:jar:2.2.9:compile</div>
<div class="ln" style="top:664px">[INFO] |  |  <span class="r"> </span>     +- org.apache.cxf:cxf-rt-ws-addr:jar:2.2.9:compile</div>
<div class="ln" style="top:681px">[INFO] |  |  <span class="r"> </span>     +- javax.xml.soap:saaj-api:jar:1.3:compile</div>
<div class="ln" style="top:698px">[INFO] |  |  <span class="r"> </span>     \- com.sun.xml.messaging.saaj:saaj-impl:jar:1.3.2:compile</div>
<div class="ln" style="top:715px">[INFO] |  +- org.esupportail:example-utils:jar:1.0-SNAPSHOT:compile</div>
<div class="ln" style="top:732px">[INFO] |  \- org.hibernate:hibernate-validator:jar:4.0.2.GA:compile</div>
<div class="ln" style="top:749px">[INFO] |     +- javax.validation:validation-api:jar:1.0.0.GA:compile</div>
<div class="ln" style="top:766px">[INFO] |     +- org.slf4j:slf4j-api:jar:1.5.6:compile</div>
<div class="ln" style="top:783px">[INFO] |     +- javax.xml.bind:jaxb-api:jar:2.1:compile</div>
<div class="ln" style="top:800px">[INFO] |     |  +- javax.xml.stream:stax-api:jar:1.0-2:compile</div>
<div class="ln" style="top:817px">[INFO] |     |  \- javax.activation:activation:jar:1.1:compile</div>
<div class="ln" style="top:834px">[INFO] |     \- com.sun.xml.bind:jaxb-impl:jar:2.1.3:compile</div>
</div>
<svg class="a" style="left:0;top:0" width="1680" height="1049" viewBox="0 0 1680 1049">
<rect x="815" y="171" width="50" height="839" fill="#f2efea"/>
<path d="M814 259.5 C831.6666666666666 259.5 848.3333333333334 272.5 865 272.5 L865 306.5 C848.3333333333334 306.5 831.6666666666666 276.5 814 276.5 Z" fill="#ddeeff" stroke="none"/><path d="M814 259.5 C831.6666666666666 259.5 848.3333333333334 272.5 865 272.5 M865 306.5 C848.3333333333334 306.5 831.6666666666666 276.5 814 276.5" fill="none" stroke="#a9bacb" stroke-width="1"/>
<path d="M814 395.5 C831.6666666666666 395.5 848.3333333333334 425.5 865 425.5 L865 884.5 C848.3333333333334 884.5 831.6666666666666 939.5 814 939.5 Z" fill="#ddeeff" stroke="none"/><path d="M814 395.5 C831.6666666666666 395.5 848.3333333333334 425.5 865 425.5 M865 884.5 C848.3333333333334 884.5 831.6666666666666 939.5 814 939.5" fill="none" stroke="#a9bacb" stroke-width="1"/>
<path d="M816 265.0 H825 L823 261.0 H826 L832 266.5 L826 272.0 H823 L825 268.0 H816 Z" fill="#000"/>
<path d="M864 278.0 H855 L857 274.0 H854 L848 279.5 L854 285.0 H857 L855 281.0 H864 Z" fill="#000"/>
<path d="M816 401.0 H825 L823 397.0 H826 L832 402.5 L826 408.0 H823 L825 404.0 H816 Z" fill="#000"/>
<path d="M864 431.0 H855 L857 427.0 H854 L848 432.5 L854 438.0 H857 L855 434.0 H864 Z" fill="#000"/>
<rect x="832" y="590" width="16" height="1" fill="#6a7780"/>
</svg>
<svg class="a" style="left:273px;top:132px" width="18" height="26" viewBox="0 0 18 26">
<path d="M3 4 L3 19.5 L6.8 16 L9.5 22.5 L12.5 21.3 L9.8 15 L15 15 Z" fill="#000" opacity="0.25" transform="translate(0.8,1)"/>
<path d="M2 2.5 L2 18 L5.8 14.5 L8.5 21 L11.5 19.8 L8.8 13.5 L14 13.5 Z" fill="#fff" stroke="#000" stroke-width="1" stroke-linejoin="round"/>
</svg>
<div class="a" style="left:0;top:1028px;width:1680px;height:21px;background:#3c3b37"></div>
<div class="a" style="left:151px;top:1028px;width:1354px;height:20px;background:#000"></div>
<div class="a" style="left:152px;top:1030px;width:1351px;height:17px;background:#ede9e3;border-top:1px solid #fbf8f2;border-left:1px solid #fbf8f2"></div>
<div class="a" style="left:1505px;top:1028px;width:175px;height:21px;background:#ede9e3"></div>
<svg class="a" style="left:0;top:0" width="1680" height="1049"><rect x="1679" y="1038" width="1" height="1" fill="#fff"/><rect x="1678" y="1037" width="1.2" height="1.2" fill="#8f7f66"/><rect x="1676" y="1041" width="1" height="1" fill="#fff"/><rect x="1675" y="1040" width="1.2" height="1.2" fill="#8f7f66"/><rect x="1679" y="1041" width="1" height="1" fill="#fff"/><rect x="1678" y="1040" width="1.2" height="1.2" fill="#8f7f66"/><rect x="1673" y="1044" width="1" height="1" fill="#fff"/><rect x="1672" y="1043" width="1.2" height="1.2" fill="#8f7f66"/><rect x="1676" y="1044" width="1" height="1" fill="#fff"/><rect x="1675" y="1043" width="1.2" height="1.2" fill="#8f7f66"/><rect x="1679" y="1044" width="1" height="1" fill="#fff"/><rect x="1678" y="1043" width="1.2" height="1.2" fill="#8f7f66"/><rect x="1670" y="1047" width="1" height="1" fill="#fff"/><rect x="1669" y="1046" width="1.2" height="1.2" fill="#8f7f66"/><rect x="1673" y="1047" width="1" height="1" fill="#fff"/><rect x="1672" y="1046" width="1.2" height="1.2" fill="#8f7f66"/><rect x="1676" y="1047" width="1" height="1" fill="#fff"/><rect x="1675" y="1046" width="1.2" height="1.2" fill="#8f7f66"/><rect x="1679" y="1047" width="1" height="1" fill="#fff"/><rect x="1678" y="1046" width="1.2" height="1.2" fill="#8f7f66"/></svg>
<div class="a t" style="left:1506px;top:1031.30px;font-size:15px;line-height:15px;color:#3c3c3c;font-weight:normal;letter-spacing:0.000px;">INS : Ln 65, Col 58</div>
</div></body></html>
